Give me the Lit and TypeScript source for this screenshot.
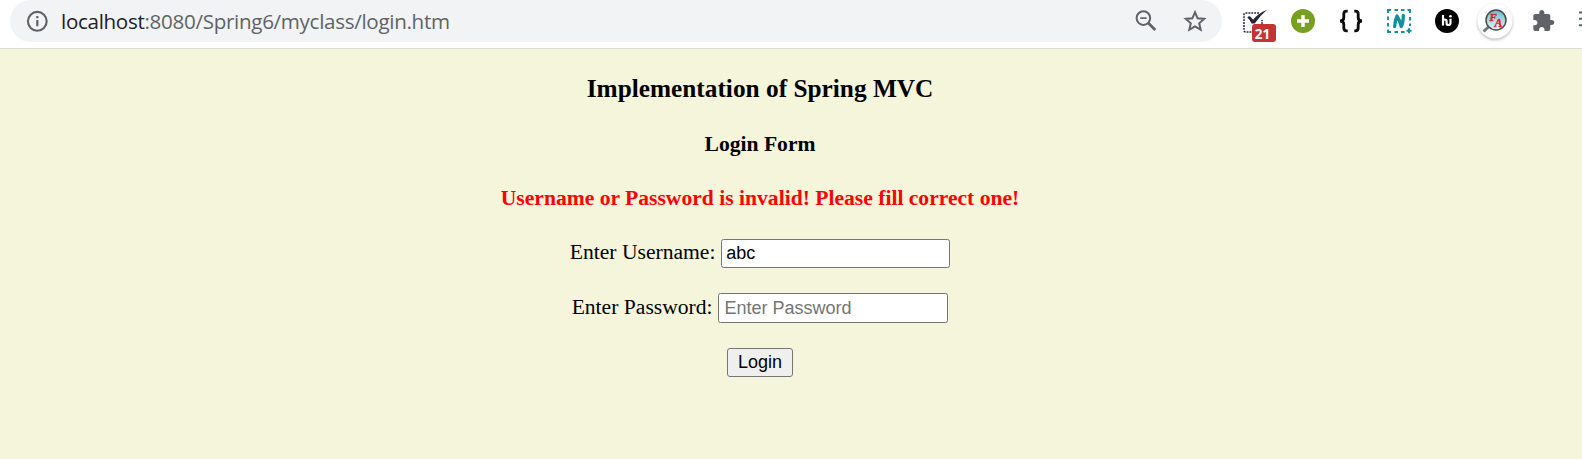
import { LitElement, html, css } from "lit";
import { customElement, state } from "lit/decorators.js";

@customElement("browser-toolbar")
class BrowserToolbar extends LitElement {
  static styles = css`
    :host {
      display: flex;
      box-sizing: border-box;
      height: 49px;
      background: #fff;
      border-bottom: 1px solid #dadce0;
      overflow: hidden;
    }
    svg { display: block; flex: none; }
    .omnibox {
      display: flex;
      align-items: center;
      box-sizing: border-box;
      width: 1212px;
      height: 42px;
      margin-left: 10px;
      padding: 0 15px 0 15px;
      border-radius: 21px;
      background: #f1f3f4;
      flex: none;
    }
    .url {
      flex: 1;
      margin-left: 12px;
      font: 20.6px/42px "Open Sans", "Noto Sans", sans-serif;
      letter-spacing: -0.31px;
      white-space: nowrap;
      color: #5f6368;
    }
    .host { color: #202124; }
    .star { margin-left: 24px; }
    .extensions {
      display: flex;
      align-items: center;
      height: 42px;
      margin-left: 13px;
      gap: 8px;
      flex: none;
    }
    .slot {
      display: flex;
      justify-content: center;
      align-items: center;
      position: relative;
      width: 40px;
      height: 42px;
      flex: none;
    }
    .badge {
      position: absolute;
      left: 17px;
      top: 24px;
      width: 24px;
      height: 18px;
      padding-right: 3px;
      box-sizing: border-box;
      border-radius: 3px;
      background: #c53434;
      color: #fff;
      font: bold 13.5px/20px "Open Sans", sans-serif;
      text-align: center;
    }
  `;

  render() {
    return html`
      <div class="omnibox">
        <svg width="24" height="24" viewBox="0 0 24 24">
          <circle cx="12.3" cy="12.3" r="9.4" fill="none" stroke="#5f6368" stroke-width="2.1" />
          <path d="M11.2 7h2.200v2.200h-2.200zM11.200 11h2.200v6.300h-2.200z" fill="#5f6368" />
        </svg>
        <div class="url"><span class="host">localhost</span>:8080/Spring6/myclass/login.htm</div>
        <svg width="24" height="24" viewBox="0 0 24 24" fill="none" stroke="#5f6368">
          <circle cx="8.400" cy="9.100" r="6.800" stroke-width="2" />
          <path d="M5.200 9.100h6.400" stroke-width="1.700" />
          <path d="M13.300 14l7 7" stroke-width="2.700" />
        </svg>
        <svg class="star" width="24" height="24" viewBox="0 0 24 24">
          <path d="M12 3.200l2.600 6.100 6.600.6-5 4.400 1.500 6.500-5.700-3.400-5.700 3.400 1.500-6.500-5-4.400 6.600-.6z" fill="none" stroke="#5f6368" stroke-width="2" />
        </svg>
      </div>
      <div class="extensions">
        <div class="slot">
          <svg width="28" height="28" viewBox="0 0 28 28">
            <path d="M18 6H4.500Q3 6 3 7.500V23.500Q3 25 4.500 25H21V13" fill="none" stroke="#24243a" stroke-width="1.500" stroke-dasharray="1.900 1" />
            <path d="M6.300 10.500q1.800-2.200 3.200-.8l2.700 3Q17 6.500 26 2.800q-7 6-12.300 13.700h-3.200Q9 12.700 6.300 10.500z" fill="#24243a" />
          </svg>
          <span class="badge">21</span>
        </div>
        <div class="slot">
          <svg width="24" height="24" viewBox="0 0 24 24">
            <circle cx="12" cy="12" r="12" fill="#779f22" />
            <path d="M12 6v12M6 12h12" stroke="#fff" stroke-width="3.400" />
          </svg>
        </div>
        <div class="slot">
          <svg width="26" height="24" viewBox="0 0 26 24" fill="none" stroke="#0b0b0b" stroke-width="2.800">
            <path d="M9.700 2.200H8.700Q5.800 2.200 5.800 5v3.500Q5.800 12 2 12q3.800 0 3.800 3.500V19q0 2.800 2.900 2.800h1" />
            <path d="M16.300 2.200h1q2.900 0 2.900 2.800v3.500Q20.200 12 24 12q-3.800 0-3.800 3.500V19q0 2.800-2.900 2.800h-1" />
          </svg>
        </div>
        <div class="slot">
          <svg width="26" height="26" viewBox="-1 -1 26 26" fill="none" stroke="#138e9b">
            <path d="M1 4V1h3M7.500 1h3.500M14 1h3.500M20.500 1h2.500v3M23 8v3.500M23 14.500v2.500M1 7.500v3.500M1 14v3.500M1 20.500v2.500h3M7.500 23h3.500M14 23h3.500" stroke-width="1.900" />
            <path d="M7.700 17.500Q8 11 10 7q2.800 4 4.200 10.500 2-3 2.100-11" stroke-width="3.300" stroke-linecap="round" stroke-linejoin="round" />
            <path d="M22 19.300v4.900M19.500 21.700h5" stroke-width="1.900" />
          </svg>
        </div>
        <div class="slot">
          <svg width="24" height="24" viewBox="0 0 24 24">
            <circle cx="12" cy="12" r="12" fill="#000" />
            <path d="M8 6v10.500M8 12.800q0-2.300 1.900-2.300 1.700 0 1.700 2v2q0 1.500 1.900 1.500 2 0 2-2V9.700" fill="none" stroke="#fff" stroke-width="2.200" />
            <circle cx="15.500" cy="7.300" r="1.300" fill="#fff" />
          </svg>
        </div>
        <div class="slot">
          <svg width="40" height="42" viewBox="0 0 40 42">
            <defs>
              <filter id="shade" x="-20%" y="-20%" width="140%" height="140%"><feGaussianBlur stdDeviation="1.400" /></filter>
              <linearGradient id="glass" x1="0" y1="0" x2="0" y2="1">
                <stop offset="0" stop-color="#66bccb" /><stop offset="1" stop-color="#e2f6fa" />
              </linearGradient>
            </defs>
            <circle cx="20" cy="22.500" r="17.500" fill="#bbb" filter="url(#shade)" />
            <circle cx="20" cy="21" r="17.500" fill="#fff" />
            <path d="M14 26.500l-5.500 5" stroke="#777" stroke-width="3" />
            <circle cx="21" cy="20" r="10" fill="url(#glass)" stroke="#494949" stroke-width="1.500" />
            <g font-family="Liberation Serif, serif" font-weight="bold" font-style="italic" fill="#e51b24" stroke="#e51b24" stroke-width=".4">
              <text x="14.500" y="20.800" font-size="11">F</text>
              <text x="19.500" y="27" font-size="12">A</text>
            </g>
          </svg>
        </div>
        <div class="slot">
          <svg width="24" height="24" viewBox="0 0 24 24">
            <path transform="translate(.3 .1)" d="M20.500 11H19V7c0-1.100-.9-2-2-2h-4V3.500C13 2.120 11.880 1 10.500 1S8 2.120 8 3.500V5H4c-1.100 0-1.990.9-1.990 2v3.800H3.500c1.490 0 2.700 1.210 2.700 2.700s-1.210 2.700-2.700 2.700H2V20c0 1.100.9 2 2 2h3.800v-1.500c0-1.490 1.210-2.700 2.700-2.700 1.490 0 2.700 1.210 2.700 2.700V22H17c1.100 0 2-.9 2-2v-4h1.500c1.380 0 2.500-1.120 2.500-2.500S21.880 11 20.500 11z" fill="#5f6368" />
          </svg>
        </div>
        <svg width="24" height="24" viewBox="0 0 24 24">
          <path d="M8 3.500h16M8 9.800h16M8 16.200h16" stroke="#5f6368" stroke-width="2" />
        </svg>
      </div>
    `;
  }
}

@customElement("login-page")
class LoginPage extends LitElement {
  static styles = css`
    :host {
      display: flex;
      flex-direction: column;
      align-items: center;
      flex: 1;
      box-sizing: border-box;
      padding: 24px 62px 0 0;
      background: #f5f5dc;
      color: #000;
      font: 21.6px/26px "Liberation Serif", "Times New Roman", serif;
      white-space: nowrap;
    }
    h3, p { margin: 0; }
    .title { font-size: 25.27px; line-height: 30px; letter-spacing: 0.02px; }
    .subtitle { margin-top: 28px; font-weight: bold; }
    .error { margin-top: 28px; font-weight: bold; color: #f00; }
    form { display: flex; flex-direction: column; align-items: center; }
    .row { display: flex; align-items: baseline; gap: 5.8px; }
    .name { margin-top: 28px; }
    .pass { margin-top: 25px; }
    input, button {
      box-sizing: border-box;
      margin: 0;
      border: 1px solid #767676;
      border-radius: 2.5px;
      font: 18px "Liberation Sans", Arial, sans-serif;
      color: #000;
    }
    input { width: 229px; height: 29px; padding: 1px 4px; background: #fff; outline: none; }
    .pass input { width: 230px; height: 30px; padding-left: 5px; }
    input::placeholder { color: #757575; opacity: 1; }
    button { width: 66px; height: 29px; margin-top: 25px; padding: 0; background: #efefef; border-radius: 3px; }
  `;

  @state() private username = "abc";

  private onInput(e: Event) {
    this.username = (e.target as HTMLInputElement).value;
  }

  render() {
    return html`
      <h3 class="title">Implementation of Spring MVC</h3>
      <p class="subtitle">Login Form</p>
      <p class="error">Username or Password is invalid! Please fill correct one!</p>
      <form @submit=${(e: Event) => e.preventDefault()}>
        <div class="row name">
          <label for="user">Enter Username:</label>
          <input id="user" type="text" .value=${this.username} @input=${this.onInput} />
        </div>
        <div class="row pass">
          <label for="pass">Enter Password:</label>
          <input id="pass" type="password" placeholder="Enter Password" />
        </div>
        <button type="submit">Login</button>
      </form>
    `;
  }
}

@customElement("app-root")
class AppRoot extends LitElement {
  static styles = css`
    :host {
      display: flex;
      flex-direction: column;
      width: 100%;
      height: 459px;
      overflow: hidden;
    }
  `;

  render() {
    return html`<browser-toolbar></browser-toolbar><login-page></login-page>`;
  }
}
